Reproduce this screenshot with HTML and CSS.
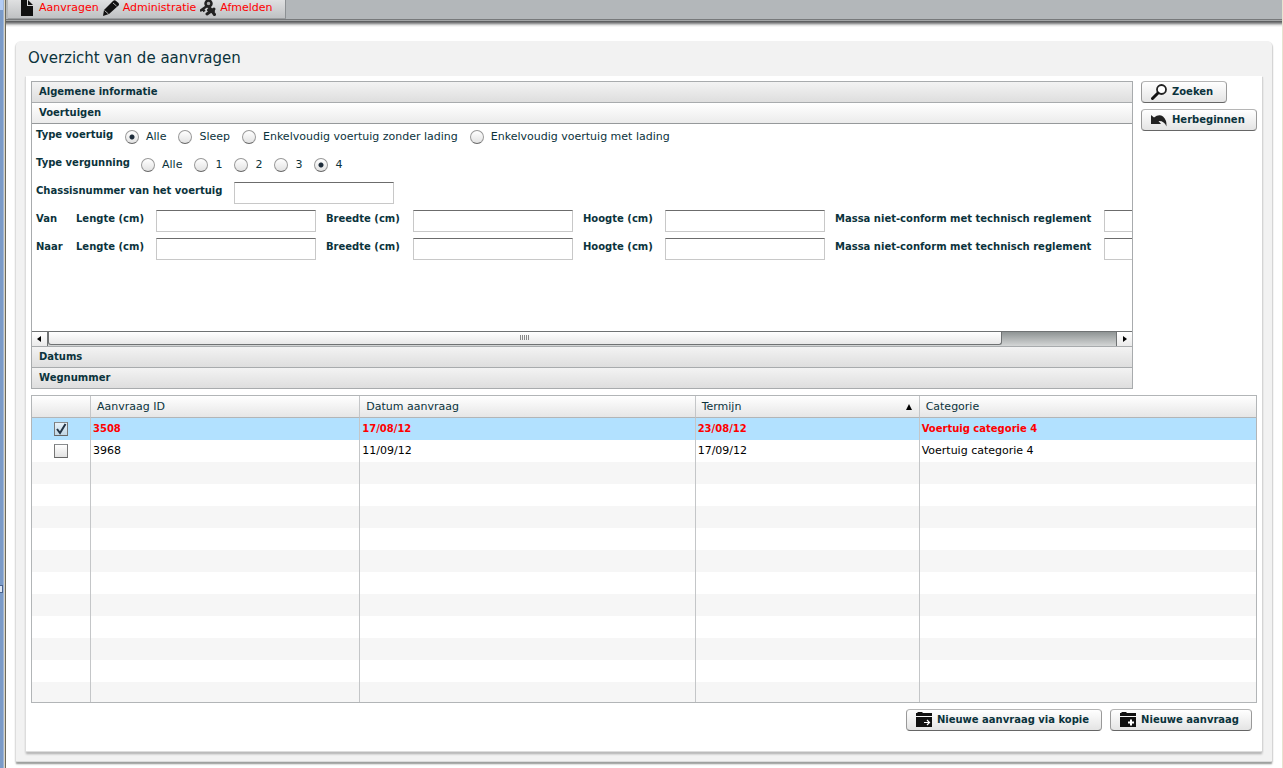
FILE: index.html
```html
<!DOCTYPE html>
<html lang="nl">
<head>
<meta charset="utf-8">
<title>Overzicht van de aanvragen</title>
<link rel="stylesheet" href="styles.css">
</head>
<body>
<div class="splitter"><span class="splitter-grip"></span></div>
<div class="app">
  <header class="topbar">
    <nav class="menu">
      <a href="#" class="menu-item"><svg class="icon" viewBox="0 0 16 16"><path fill="#111" d="M2 0h6v6h6v10H2zM9 0l5 5H9z"/></svg>Aanvragen</a>
      <a href="#" class="menu-item"><svg class="icon" viewBox="0 0 16 16"><path fill="#111" d="M0 16l1-6L10 1q1-1 2.500-.5L15.500 3q1 1.500 0 2.500L6 14z"/><path stroke="#ddd" stroke-width=".8" d="M1.500 10.500l4 3.500M10 3l3.500 3"/></svg>Administratie</a>
      <a href="#" class="menu-item"><svg class="icon" viewBox="0 0 16 16"><circle cx="8.500" cy="3.500" r="3" fill="#aaa" stroke="#222" stroke-width="2.500"/><path fill="none" stroke="#222" stroke-width="2.500" d="M7 6L0 11M2.500 8.500l2 3"/><path fill="none" stroke="#222" stroke-width="3" stroke-linecap="round" d="M7 14l7-5M9 7l5.500 7.500M8.500 10l5 1"/></svg>Afmelden</a>
    </nav>
  </header>
  <main class="panel">
    <h1 class="panel-title">Overzicht van de aanvragen</h1>
    <div class="panel-body">
      <div class="search">
        <div class="accordion">
          <button type="button" class="acc-head">Algemene informatie</button>
          <button type="button" class="acc-head acc-head-open">Voertuigen</button>
          <div class="acc-body">
            <form class="form">
              <div class="form-row" role="radiogroup" aria-labelledby="type-voertuig">
                <span id="type-voertuig" class="label w-type">Type voertuig</span>
                <span class="choices">
                  <label class="choice"><input type="radio" name="voertuig" checked>Alle</label>
                  <label class="choice"><input type="radio" name="voertuig">Sleep</label>
                  <label class="choice"><input type="radio" name="voertuig">Enkelvoudig voertuig zonder lading</label>
                  <label class="choice"><input type="radio" name="voertuig">Enkelvoudig voertuig met lading</label>
                </span>
              </div>
              <div class="form-row" role="radiogroup" aria-labelledby="type-vergunning">
                <span id="type-vergunning" class="label w-permit">Type vergunning</span>
                <span class="choices">
                  <label class="choice"><input type="radio" name="vergunning">Alle</label>
                  <label class="choice"><input type="radio" name="vergunning">1</label>
                  <label class="choice"><input type="radio" name="vergunning">2</label>
                  <label class="choice"><input type="radio" name="vergunning">3</label>
                  <label class="choice"><input type="radio" name="vergunning" checked>4</label>
                </span>
              </div>
              <div class="form-row">
                <label class="label w-chassis" for="chassis">Chassisnummer van het voertuig</label>
                <input class="field" type="text" id="chassis">
              </div>
              <div class="form-row">
                <span class="label w-range">Van</span>
                <label class="label w-length" for="l1">Lengte (cm)</label><input class="field" type="text" id="l1">
                <label class="label w-width" for="b1">Breedte (cm)</label><input class="field" type="text" id="b1">
                <label class="label w-height" for="h1">Hoogte (cm)</label><input class="field" type="text" id="h1">
                <label class="label w-mass" for="m1">Massa niet-conform met technisch reglement</label><input class="field" type="text" id="m1">
              </div>
              <div class="form-row">
                <span class="label w-range">Naar</span>
                <label class="label w-length" for="l2">Lengte (cm)</label><input class="field" type="text" id="l2">
                <label class="label w-width" for="b2">Breedte (cm)</label><input class="field" type="text" id="b2">
                <label class="label w-height" for="h2">Hoogte (cm)</label><input class="field" type="text" id="h2">
                <label class="label w-mass" for="m2">Massa niet-conform met technisch reglement</label><input class="field" type="text" id="m2">
              </div>
            </form>
            <div class="scrollbar">
              <button type="button" class="scroll-btn" aria-label="Naar links"><svg width="5" height="6" viewBox="0 0 5 6"><path d="M0 3l4-3v6z"/></svg></button>
              <div class="scroll-track"><div class="scroll-thumb"><span class="grip"></span></div></div>
              <button type="button" class="scroll-btn scroll-btn-right" aria-label="Naar rechts"><svg width="5" height="6" viewBox="0 0 5 6"><path d="M5 3L1 0v6z"/></svg></button>
            </div>
          </div>
          <button type="button" class="acc-head">Datums</button>
          <button type="button" class="acc-head">Wegnummer</button>
        </div>
        <div class="actions">
          <button type="button" class="btn"><svg class="icon" viewBox="0 0 16 16"><circle cx="10.500" cy="5.500" r="4.500" fill="#fff" stroke="#222" stroke-width="1.800"/><path d="M7 9l-5.500 5.500" stroke="#111" stroke-width="3" stroke-linecap="round"/></svg>Zoeken</button>
          <button type="button" class="btn"><svg class="icon" viewBox="0 0 16 16"><path fill="#222" d="M0 3l3 2.500Q8 1.500 12 4.500q4 3.500 3.500 10Q13 8.500 7.500 9L10 12H0z"/></svg>Herbeginnen</button>
        </div>
      </div>

      <div class="grid">
        <table class="table">
          <colgroup><col class="c-check"><col class="c-id"><col class="c-date"><col class="c-term"><col class="c-cat"></colgroup>
          <thead>
            <tr><th></th><th>Aanvraag ID</th><th>Datum aanvraag</th><th><span class="sorted">Termijn <svg width="6" height="6" viewBox="0 0 6 6"><path d="M3 0l3 6H0z"/></svg></span></th><th>Categorie</th></tr>
          </thead>
          <tbody>
            <tr class="selected"><td class="check"><input type="checkbox" aria-label="Aanvraag 3508" checked></td><td>3508</td><td>17/08/12</td><td>23/08/12</td><td>Voertuig categorie 4</td></tr>
            <tr><td class="check"><input type="checkbox" aria-label="Aanvraag 3968"></td><td>3968</td><td>11/09/12</td><td>17/09/12</td><td>Voertuig categorie 4</td></tr>
            <tr><td></td><td></td><td></td><td></td><td></td></tr>
            <tr><td></td><td></td><td></td><td></td><td></td></tr>
            <tr><td></td><td></td><td></td><td></td><td></td></tr>
            <tr><td></td><td></td><td></td><td></td><td></td></tr>
            <tr><td></td><td></td><td></td><td></td><td></td></tr>
            <tr><td></td><td></td><td></td><td></td><td></td></tr>
            <tr><td></td><td></td><td></td><td></td><td></td></tr>
            <tr><td></td><td></td><td></td><td></td><td></td></tr>
            <tr><td></td><td></td><td></td><td></td><td></td></tr>
            <tr><td></td><td></td><td></td><td></td><td></td></tr>
            <tr><td></td><td></td><td></td><td></td><td></td></tr>
          </tbody>
        </table>
      </div>

      <div class="footer">
        <button type="button" class="btn"><svg class="icon" viewBox="0 0 16 16"><path fill="#111" d="M0 1h1l1-1h4l1 1h9v3H0zM0 5h16v10H0z"/><path fill="none" stroke="#fff" stroke-width="1.200" d="M8 10.500h5.500M11 8l2.500 2.500L11 13"/></svg>Nieuwe aanvraag via kopie</button>
        <button type="button" class="btn"><svg class="icon" viewBox="0 0 16 16"><path fill="#111" d="M0 1h1l1-1h4l1 1h9v3H0zM0 5h16v10H0z"/><path stroke="#fff" stroke-width="2" d="M8 10.500h6M11 7.500v6"/></svg>Nieuwe aanvraag</button>
      </div>
    </div>
  </main>
</div>
</body>
</html>
```
FILE: styles.css
```css
* { box-sizing: border-box; }

body {
  display: flex;
  min-height: 100vh;
  margin: 0;
  background: #fff;
  border-right: 1px solid #e6e4d0;
  color: #0b333c;
  font: 11px/18px "DejaVu Sans", Verdana, sans-serif;
}

button, input { font: inherit; color: inherit; margin: 0; }

.icon { width: 16px; height: 16px; flex: none; }

/* Pane divider on the left edge */
.splitter {
  position: relative;
  flex: none;
  width: 6px;
  background: linear-gradient(#b3ccf5 10px, #7b9bc8 10px);
  border-right: 1px solid #6e6a5c;
  box-shadow: inset -1px 0 #d8d4c4, inset -2px 0 #9fb6d8;
}
.splitter-grip {
  position: absolute;
  left: 0;
  top: 585px;
  width: 3px;
  height: 8px;
  background: #dce6f5;
  border: 1px solid #4a648e;
  border-left: 0;
}

.app {
  display: flex;
  flex-direction: column;
  flex: 1;
  min-width: 0;
}

.topbar {
  flex: none;
  display: flex;
  height: 20px;
  padding-left: 2px;
  background: #b3b7ba;
  border-bottom: 1px solid #77797b;
  box-shadow: 0 1px #a3a5a6, 0 2px #5e6061, 0 3px #78797a, 0 4px #9a9b9c, 0 5px #c4c5c5, 0 6px #e6e6e6, 0 7px #f6f6f6;
}
.menu {
  display: flex;
  align-items: center;
  gap: 4px;
  padding: 0 12px 3px 11px;
  background: linear-gradient(#dfe0e1, #bfc1c3);
  border-right: 1px solid #8c9093;
  border-bottom: 1px solid #9b9ea0;
}
.menu-item {
  display: flex;
  align-items: center;
  gap: 4px;
  color: #f00;
  text-decoration: none;
}

.panel {
  display: flex;
  flex-direction: column;
  flex: 1;
  margin: 21px 10px 7px;
  padding: 0 10px;
  padding-bottom: 10px;
  background: #f2f2f2;
  border-radius: 5px 5px 0 0;
  box-shadow: -1px 1px 1px #ddd, 1px 1px 1px #d4d4d4, 0 3px 2px #8d908e;
}
.panel-title {
  margin: 0;
  padding: 8px 2px 9px;
  font-size: 15px;
  font-weight: normal;
  line-height: 18px;
}
.panel-body {
  display: flex;
  flex-direction: column;
  flex: 1;
  padding: 5px 5px 20px;
  background: #fff;
  box-shadow: -1px 1px 1px #ddd, 1px 1px 1px #d4d4d4, 0 3px 2px #aaa;
}

.search { display: flex; align-items: flex-start; gap: 8px; }

.accordion {
  flex: 1;
  min-width: 0;
  display: flex;
  flex-direction: column;
  border: 1px solid #a8abad;
  border-top: 0;
}
.acc-head {
  height: 21px;
  padding: 0 7px;
  border: 0;
  border-top: 1px solid #a8abad;
  background: linear-gradient(#f3f3f3, #dedede);
  font-size: 10px;
  font-weight: bold;
  line-height: 18px;
  text-align: left;
}
.acc-head-open {
  height: 22px;
  background: linear-gradient(#fff, #ebebeb);
  border-bottom: 1px solid #96999b;
}

.form {
  display: flex;
  flex-direction: column;
  gap: 6px;
  height: 207px;
  padding: 2px 0 0 4px;
  overflow: hidden;
}
.form-row { display: flex; flex: none; gap: 10px; height: 22px; }
.label { flex: none; font-size: 10px; font-weight: bold; line-height: 18px; white-space: nowrap; }
.w-type { width: 79px; }
.w-permit { width: 95px; }
.w-chassis { width: 188px; }
.w-range { width: 30px; }
.w-length { width: 70px; }
.w-width { width: 77px; }
.w-height { width: 72px; }
.w-mass { width: 259px; }

.choices { display: flex; align-items: center; gap: 12px; }
.choice { display: flex; align-items: center; gap: 7px; white-space: nowrap; }

input[type="radio"], input[type="checkbox"] {
  appearance: none;
  width: 14px;
  height: 14px;
  border: 1px solid #999;
  border-bottom-color: #666;
  background: linear-gradient(#fff, #e2e2e2);
}
input[type="radio"] { border-radius: 50%; }
input[type="radio"]:checked {
  background: radial-gradient(circle, #1d2c3a 2px, transparent 3px), linear-gradient(#fff, #e2e2e2);
}

.field {
  flex: none;
  width: 160px;
  height: 22px;
  padding: 0 4px;
  border: 1px solid #c8c8c8;
  border-top-color: #6c6c6c;
  background: #fff;
}

.scrollbar { display: flex; height: 15px; border-top: 1px solid #6f7273; }
.scroll-btn {
  display: flex;
  align-items: center;
  justify-content: center;
  flex: none;
  width: 16px;
  padding: 0;
  border: 0;
  border-right: 1px solid #6f7273;
  background: linear-gradient(#fff, #eaeaea);
}
.scroll-btn-right { border-right: 0; border-left: 1px solid #6f7273; }
.scroll-track {
  flex: 1;
  background: linear-gradient(#8f9494, #d4d6d6);
}
.scroll-thumb {
  display: flex;
  justify-content: center;
  width: 89.300%;
  height: 13px;
  padding-top: 3px;
  border: 1px solid #6f7273;
  border-top: 0;
  border-radius: 0 0 3px 3px;
  background: linear-gradient(#fff, #e8e8e8);
}
.grip {
  width: 9px;
  height: 5px;
  background: repeating-linear-gradient(90deg, #888 0 1px, transparent 1px 2px);
}

.actions {
  display: flex;
  flex-direction: column;
  align-items: flex-start;
  gap: 6px;
  width: 116px;
}
.actions .btn { padding-right: 11px; min-width: 86px; }

.btn {
  display: flex;
  align-items: center;
  gap: 5px;
  height: 22px;
  padding: 0 12px 0 9px;
  border: 1px solid #999;
  border-top-color: #b5b5b5;
  border-bottom-color: #666;
  border-radius: 4px;
  background: linear-gradient(#fff, #e4e4e4);
  font-size: 10px;
  font-weight: bold;
  white-space: nowrap;
}

.grid {
  flex: 1 0 308px;
  height: 308px;
  margin-top: 6px;
  overflow: hidden;
  border: 1px solid #b2b5b7;
}
.table { width: 100%; table-layout: fixed; border-collapse: separate; border-spacing: 0; }
.c-check { width: 59px; }
.c-id { width: 22%; }
.c-date { width: 27.400%; }
.c-term { width: 18.300%; }
.table th {
  height: 22px;
  padding: 0 7px 0 6px;
  border-right: 1px solid #c4c6c8;
  border-bottom: 1px solid #b2b5b7;
  background: linear-gradient(#fff, #e6e6e6);
  font-weight: normal;
  text-align: left;
}
.table td {
  height: 22px;
  padding: 0 2px;
  border-right: 1px solid #c4c6c8;
  color: #000;
}
.table th:last-child, .table td:last-child { border-right: 0; }
.table tbody tr:nth-child(odd) { background: #f6f6f6; }
.table tbody tr.selected { background: #b2e1ff; }
.table tr.selected td { color: #f00; font-size: 10px; font-weight: bold; }
.sorted { display: flex; align-items: center; justify-content: space-between; }
.table .check { text-align: center; }
.check input { display: block; margin: 0 auto; border-color: #8a8d8f #777 #666; }
.check input:checked {
  background: url("data:image/svg+xml,%3Csvg xmlns='http://www.w3.org/2000/svg' viewBox='0 0 12 12'%3E%3Cpath d='M2 6l3 4 5.500-9' fill='none' stroke='%23223344' stroke-width='2'/%3E%3C/svg%3E") center / 12px 12px no-repeat, linear-gradient(#e6f2fa, #c2d6e4);
}

.footer { display: flex; justify-content: flex-end; gap: 8px; padding: 6px 5px 0 0; }
```
